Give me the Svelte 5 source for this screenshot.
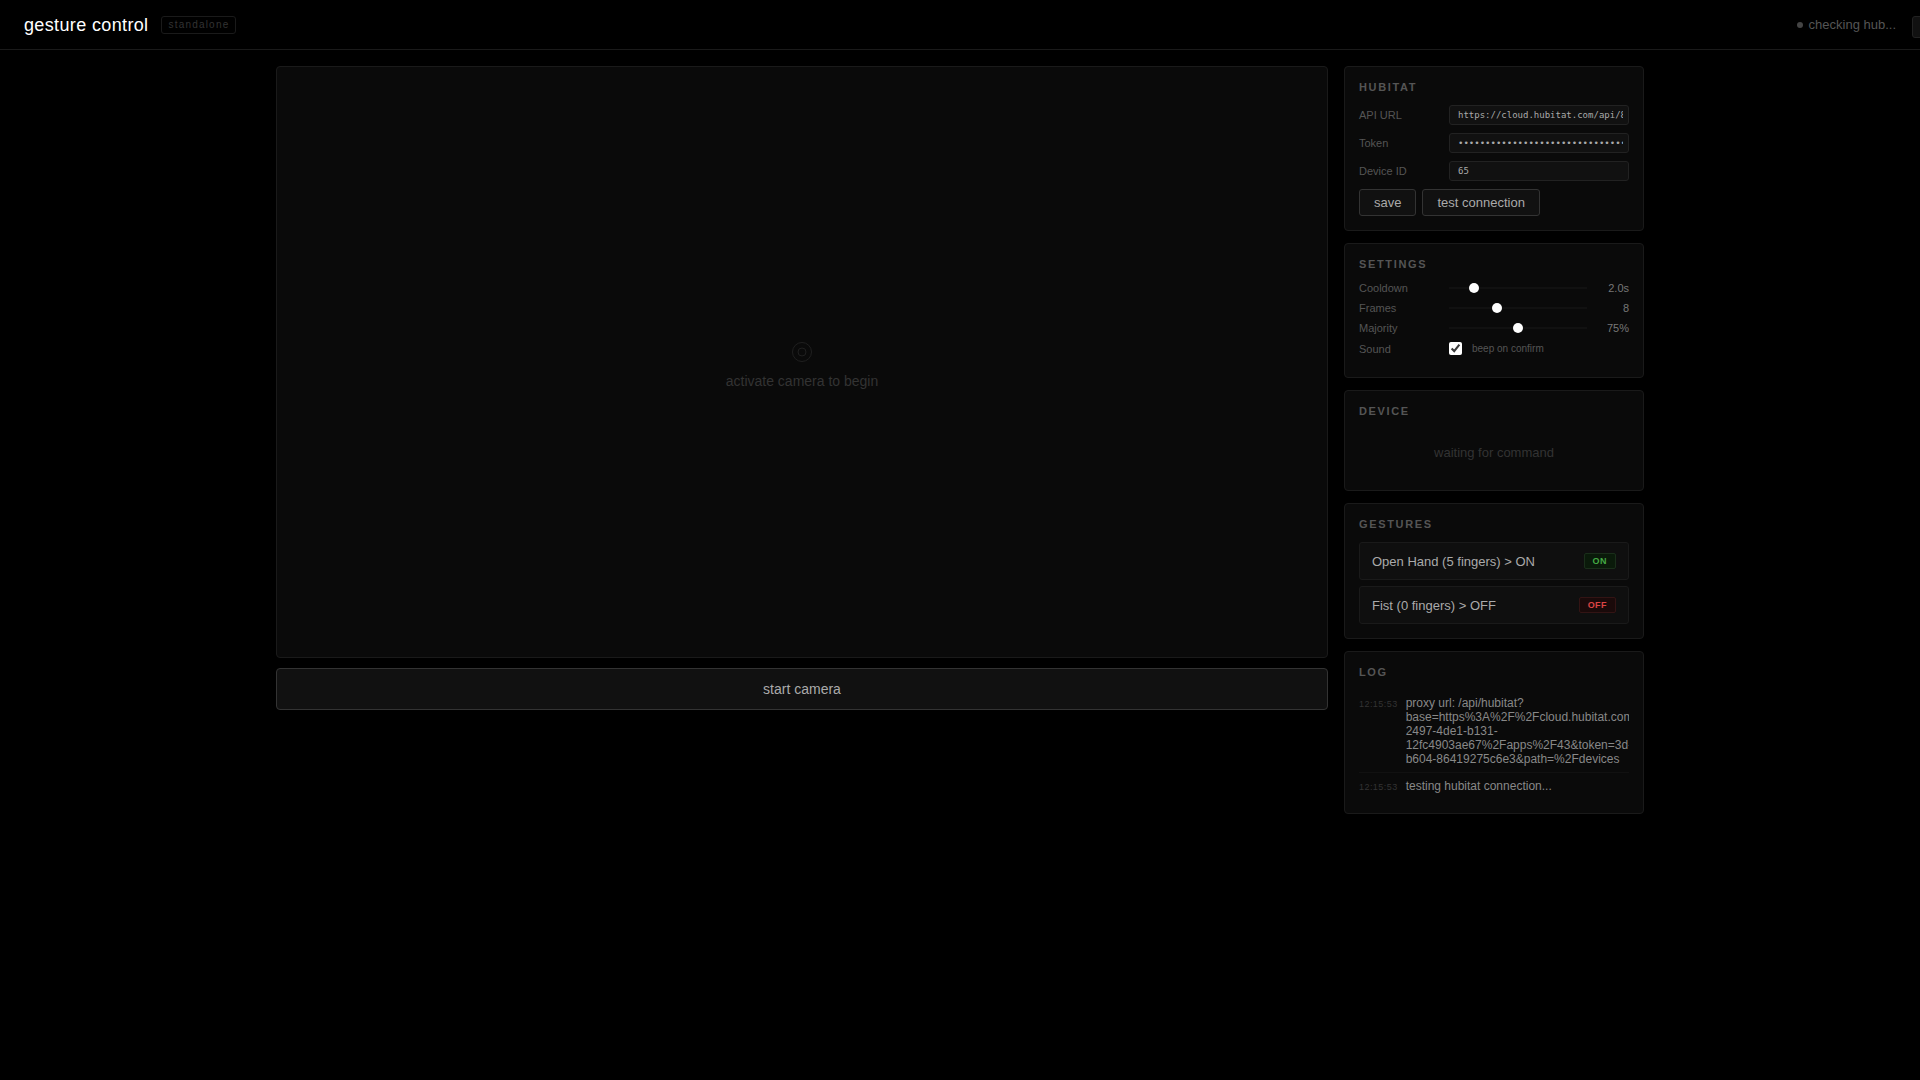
<script lang="ts">
	let apiUrl = $state('https://cloud.hubitat.com/api/8');
	let token = $state('0'.repeat(36));
	let deviceId = $state('65');

	let cooldown = $state(2);
	let frames = $state(8);
	let majority = $state(75);
	let sound = $state(true);

	const gestures = [
		{ label: 'Open Hand (5 fingers) > ON', action: 'on' },
		{ label: 'Fist (0 fingers) > OFF', action: 'off' }
	];

	let log = $state([
		{
			time: '12:15:53',
			text: 'proxy url: /api/hubitat?base=https%3A%2F%2Fcloud.hubitat.com%2Fapi-2497-4de1-b131-12fc4903ae67%2Fapps%2F43&token=3d-b604-86419275c6e3&path=%2Fdevices'
		},
		{ time: '12:15:53', text: 'testing hubitat connection...' }
	]);
</script>

<header>
	<div class="brand">
		<h1>gesture control</h1>
		<span class="mode">standalone</span>
	</div>
	<div class="actions">
		<div class="status"><span class="dot"></span>checking hub...</div>
		<button class="header-btn" aria-label="refresh"></button>
	</div>
</header>

<main>
	<section class="camera">
		<div class="video">
			<svg class="lens" viewBox="0 -6 22 28" aria-hidden="true">
				<circle cx="11" cy="11" r="9.5" />
				<circle cx="11" cy="11" r="4" />
			</svg>
			<p>activate camera to begin</p>
		</div>
		<button class="start-btn">start camera</button>
	</section>

	<aside>
		<section class="card">
			<h2>Hubitat</h2>
			<div class="row">
				<label for="api-url">API URL</label>
				<input id="api-url" class="field" type="text" bind:value={apiUrl} />
			</div>
			<div class="row">
				<label for="token">Token</label>
				<input id="token" class="field" type="password" bind:value={token} />
			</div>
			<div class="row">
				<label for="device-id">Device ID</label>
				<input id="device-id" class="field" type="text" bind:value={deviceId} />
			</div>
			<div class="buttons">
				<button class="btn">save</button>
				<button class="btn">test connection</button>
			</div>
		</section>

		<section class="card">
			<h2>Settings</h2>
			<div class="row">
				<label for="cooldown">Cooldown</label>
				<input id="cooldown" type="range" min="0.5" max="10" step="0.5" bind:value={cooldown} />
				<output for="cooldown">{cooldown.toFixed(1)}s</output>
			</div>
			<div class="row">
				<label for="frames">Frames</label>
				<input id="frames" type="range" min="3" max="18" bind:value={frames} />
				<output for="frames">{frames}</output>
			</div>
			<div class="row">
				<label for="majority">Majority</label>
				<input id="majority" type="range" min="50" max="100" bind:value={majority} />
				<output for="majority">{majority}%</output>
			</div>
			<div class="row">
				<label for="sound">Sound</label>
				<input id="sound" type="checkbox" bind:checked={sound} />
				<span class="hint">beep on confirm</span>
			</div>
		</section>

		<section class="card">
			<h2>Device</h2>
			<p class="waiting">waiting for command</p>
		</section>

		<section class="card">
			<h2>Gestures</h2>
			<div class="gestures">
				{#each gestures as gesture}
					<div class="gesture">
						<span>{gesture.label}</span>
						<span class="badge {gesture.action}">{gesture.action}</span>
					</div>
				{/each}
			</div>
		</section>

		<section class="card">
			<h2>Log</h2>
			<div class="log">
				{#each log as entry}
					<div class="entry">
						<time>{entry.time}</time>
						<span>{entry.text}</span>
					</div>
				{/each}
			</div>
		</section>
	</aside>
</main>

<style>
	:global(body) {
		background: #000;
		color: #aaa;
		font-family: 'Liberation Sans', Arial, sans-serif;
		font-size: 13px;
		overflow-x: hidden;
	}

	h1,
	h2,
	p {
		margin: 0;
	}

	button,
	input {
		box-sizing: border-box;
		margin: 0;
		font-family: inherit;
	}

	header {
		display: flex;
		justify-content: space-between;
		align-items: flex-start;
		padding: 16px 24px 11px;
		border-bottom: 1px solid #1a1a1a;
		overflow: hidden;
	}

	.brand {
		display: flex;
		gap: 13px;
	}

	h1 {
		color: #fff;
		font-size: 18px;
		font-weight: 400;
		line-height: 18px;
		letter-spacing: 0.02em;
	}

	.mode {
		padding: 0 6px;
		border: 1px solid #1a1a1a;
		border-radius: 3px;
		color: #333;
		font-size: 10px;
		line-height: 16px;
		letter-spacing: 0.12em;
	}

	.actions {
		display: flex;
		align-items: flex-start;
		gap: 16px;
	}

	.status {
		display: flex;
		align-items: center;
		gap: 6px;
		color: #555;
		line-height: 18px;
	}

	.dot {
		width: 6px;
		height: 6px;
		border-radius: 50%;
		background: #444;
	}

	/* runs past the right edge of the bar */
	.header-btn {
		width: 84px;
		height: 22px;
		margin-right: -100px;
		background: #111;
		border: 1px solid #222;
		border-radius: 3px;
	}

	main {
		display: grid;
		grid-template-columns: 1fr 300px;
		align-items: start;
		gap: 16px;
		box-sizing: border-box;
		max-width: 1400px;
		margin: 0 auto;
		padding: 16px;
	}

	.camera {
		display: flex;
		flex-direction: column;
		gap: 10px;
	}

	.video {
		display: flex;
		flex-direction: column;
		align-items: center;
		justify-content: center;
		gap: 11px;
		box-sizing: border-box;
		aspect-ratio: 16 / 9;
		background: #0a0a0a;
		border: 1px solid #1a1a1a;
		border-radius: 4px;
		color: #333;
		font-size: 14px;
		line-height: 15px;
	}

	.lens {
		width: 22px;
		height: 28px;
		fill: none;
		stroke: #1f1f1f;
	}

	.start-btn {
		height: 42px;
		background: #111;
		border: 1px solid #333;
		border-radius: 4px;
		color: #aaa;
		font-size: 14px;
		cursor: pointer;
	}

	aside {
		display: flex;
		flex-direction: column;
		gap: 12px;
		min-width: 0;
	}

	.card {
		padding: 14px;
		background: #0a0a0a;
		border: 1px solid #1a1a1a;
		border-radius: 4px;
	}

	h2 {
		margin-bottom: 12px;
		color: #555;
		font-size: 11px;
		font-weight: 700;
		line-height: 12px;
		letter-spacing: 0.15em;
		text-transform: uppercase;
	}

	.row {
		display: flex;
		align-items: center;
		gap: 10px;
		margin-bottom: 8px;
		font-size: 11px;
		line-height: 12px;
	}

	.row label {
		width: 80px;
		color: #555;
	}

	.field {
		flex: 1;
		min-width: 0;
		height: 20px;
		padding: 0 5px 0 8px;
		background: #111;
		border: 1px solid #222;
		border-radius: 3px;
		color: #aaa;
		font-family: 'DejaVu Sans Mono', monospace;
		font-size: 9px;
	}

	input[type='range'] {
		flex: 1;
		min-width: 0;
		height: 2px;
		appearance: none;
		background: #111;
	}

	input[type='range']::-webkit-slider-thumb {
		appearance: none;
		width: 10px;
		height: 10px;
		border-radius: 50%;
		background: #fff;
	}

	input[type='checkbox'] {
		width: 13px;
		height: 13px;
		accent-color: #fff;
	}

	output {
		width: 32px;
		color: #777;
		text-align: right;
	}

	.hint {
		color: #555;
		font-size: 10px;
	}

	.buttons {
		display: flex;
		gap: 6px;
	}

	.btn {
		height: 27px;
		padding: 0 14px;
		background: #111;
		border: 1px solid #333;
		border-radius: 3px;
		color: #aaa;
		font-size: 13px;
		cursor: pointer;
	}

	.waiting {
		padding: 16px 0;
		color: #333;
		line-height: 15px;
		text-align: center;
	}

	.gestures {
		display: flex;
		flex-direction: column;
		gap: 6px;
	}

	.gesture {
		display: flex;
		justify-content: space-between;
		align-items: center;
		padding: 10px 12px;
		background: #0f0f0f;
		border: 1px solid #1a1a1a;
		border-radius: 3px;
	}

	.badge {
		padding: 0 8px;
		border: 1px solid;
		border-radius: 2px;
		font-size: 9px;
		font-weight: 700;
		line-height: 14px;
		letter-spacing: 0.05em;
		text-transform: uppercase;
	}

	.on {
		background: #0a1a0a;
		border-color: #1a2e1a;
		color: #4a4;
	}

	.off {
		background: #1a0a0a;
		border-color: #331414;
		color: #d44;
	}

	.log {
		overflow: hidden;
	}

	.entry {
		display: flex;
		align-items: baseline;
		gap: 8px;
		padding: 6px 0;
		color: #888;
		font-size: 12px;
		line-height: 14px;
	}

	.entry + .entry {
		border-top: 1px solid #111;
	}

	.entry span {
		min-width: 0;
	}

	time {
		color: #333;
		font-size: 9px;
		line-height: 12px;
		letter-spacing: 0.05em;
	}
</style>
